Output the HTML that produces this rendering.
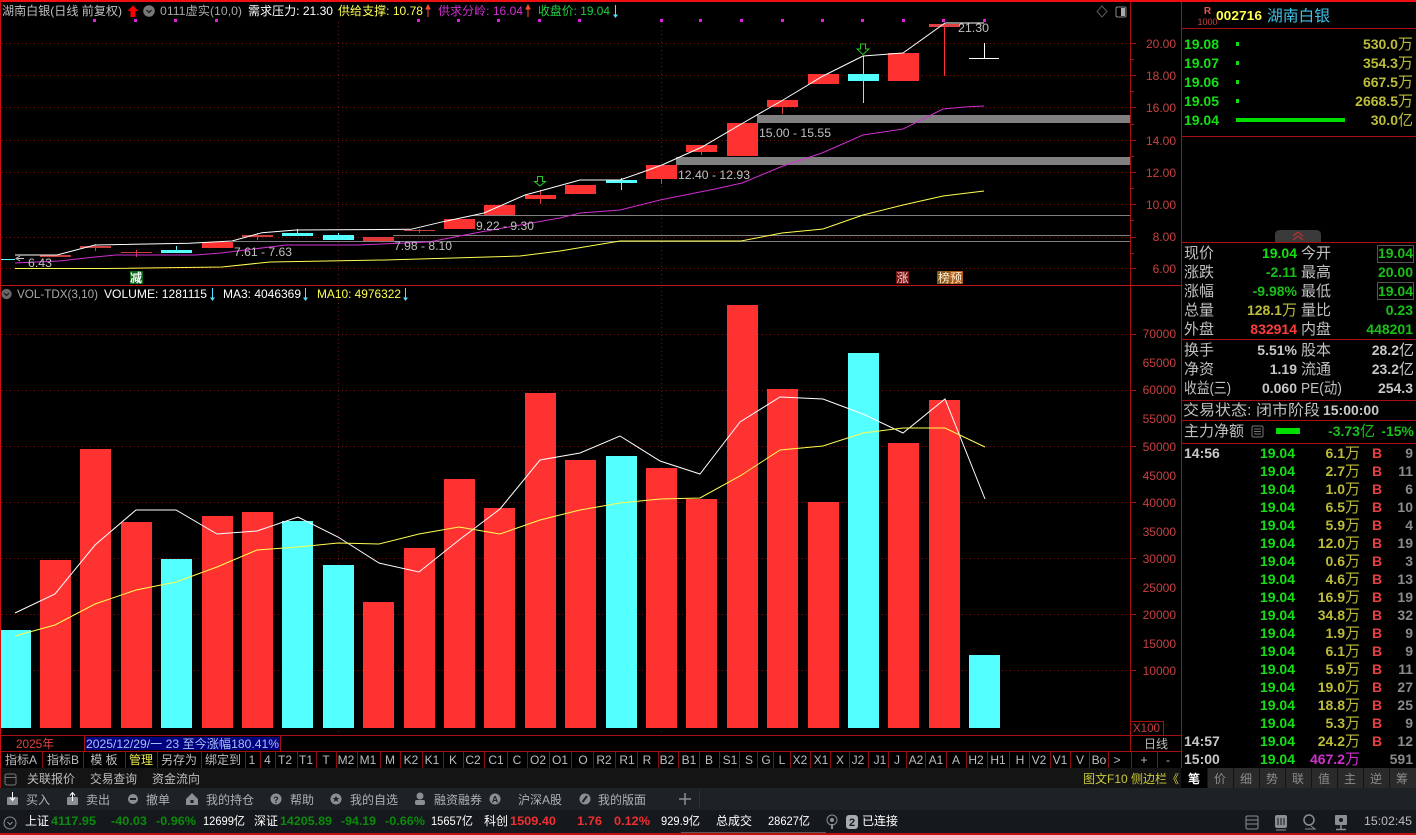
<!DOCTYPE html>
<html><head><meta charset="utf-8"><title>湖南白银</title>
<style>
html,body{margin:0;padding:0;background:#000;width:1416px;height:835px;overflow:hidden}
svg{display:block}
text{font-family:"Liberation Sans","Noto Sans CJK SC",sans-serif;font-size:12px;fill:#c0c0c0}
.ax text{fill:#c84040;text-anchor:end;font-size:12px}
.l text{font-size:15px;fill:#c0c0c0}
.b text,text.b{font-weight:bold;font-size:14px}
.e{text-anchor:end}
.n{font-weight:normal;font-size:15px}
.g,.g text{fill:#14e014}
.y,.y text{fill:#bcbc3a}
.w{fill:#c8c8c8}.r{fill:#ff3c3c}.d{fill:#0c8a0c}
.tb text{text-anchor:middle;font-size:12px;fill:#bdbdbd}
.tk text{font-weight:bold;font-size:14px}
.sb text{font-weight:bold;font-size:12px}
</style></head><body>
<svg width="1416" height="835" viewBox="0 0 1416 835" xmlns="http://www.w3.org/2000/svg">
<rect width="1416" height="835" fill="#000"/>

<!-- grid -->
<g stroke="#6e1414" stroke-width="1" stroke-dasharray="1 3" fill="none">
<path d="M2 43.5H1130M2 75.5H1130M2 107.5H1130M2 140.5H1130M2 172.5H1130M2 204.5H1130M2 237.5H1130M2 268.5H1130"/>
<path d="M2 334.5H1130M2 390.5H1130M2 446.5H1130M2 502.5H1130M2 558.5H1130M2 614.5H1130M2 670.5H1130"/>
<path d="M338.5 22V285M661.5 22V285M338.5 287V735M661.5 287V735"/>
</g>

<!-- magenta dots -->
<g fill="#e020e0">
<rect x="93" y="19" width="3" height="3"/><rect x="134" y="19" width="3" height="3"/><rect x="174" y="19" width="3" height="3"/><rect x="215" y="19" width="3" height="3"/><rect x="417" y="19" width="3" height="3"/><rect x="457" y="19" width="3" height="3"/><rect x="497" y="19" width="3" height="3"/><rect x="538" y="19" width="3" height="3"/><rect x="578" y="19" width="3" height="3"/><rect x="660" y="19" width="3" height="3"/><rect x="699" y="19" width="3" height="3"/><rect x="740" y="19" width="3" height="3"/><rect x="781" y="19" width="3" height="3"/><rect x="821" y="19" width="3" height="3"/><rect x="861" y="19" width="3" height="3"/><rect x="902" y="19" width="3" height="3"/><rect x="942" y="19" width="3" height="3"/><rect x="983" y="19" width="3" height="3"/>
</g>

<!-- zone lines -->
<g fill="#808080">
<rect x="757" y="115" width="373" height="8"/>
<rect x="676" y="157" width="454" height="8"/>
<rect x="474" y="215" width="656" height="1"/>
<rect x="393" y="235" width="737" height="1"/>
<rect x="233" y="241" width="897" height="1"/>
</g>

<!-- wicks -->
<g stroke-width="1" fill="none">
<path stroke="#d84040" d="M95.5 244V251M136.5 250V257M257.5 233V240M419.5 229V233M540.5 190V204M661.5 179V184M701.5 152V155M782.5 107V114"/>
<path stroke="#ff3232" d="M944.5 24V76"/>
<path stroke="#54ffff" d="M176.5 246V253M297.5 229V236M338.5 233V238M621.5 178V190M863.5 56V103"/>
</g>
<!-- candles -->
<g fill="#ff3232">
<rect x="40" y="255" width="31" height="2" fill="#c84040"/>
<rect x="80" y="246" width="31" height="2" fill="#c84040"/>
<rect x="121" y="252" width="31" height="1" fill="#c84040"/>
<rect x="202" y="242" width="31" height="6"/>
<rect x="242" y="235" width="31" height="2" fill="#c84040"/>
<rect x="363" y="237" width="31" height="4" fill="#e03838"/>
<rect x="404" y="230" width="31" height="1" fill="#c84040"/>
<rect x="444" y="219" width="31" height="10"/>
<rect x="484" y="205" width="31" height="10"/>
<rect x="525" y="195" width="31" height="4"/>
<rect x="565" y="185" width="31" height="9"/>
<rect x="646" y="165" width="31" height="14"/>
<rect x="686" y="145" width="31" height="7"/>
<rect x="727" y="123" width="31" height="33"/>
<rect x="767" y="100" width="31" height="7"/>
<rect x="808" y="74" width="31" height="10"/>
<rect x="888" y="53" width="31" height="28"/>
<rect x="929" y="24" width="31" height="3" fill="#e04040"/>
</g>
<g fill="#54ffff">
<rect x="161" y="250" width="31" height="3"/>
<rect x="282" y="233" width="31" height="3"/>
<rect x="323" y="235" width="31" height="5"/>
<rect x="606" y="180" width="31" height="3"/>
<rect x="848" y="74" width="31" height="7"/>
<rect x="1" y="259" width="14" height="1"/>
</g>
<!-- last T mark -->
<path d="M969 58.5H999M984.5 43V58" stroke="#fff" fill="none"/>

<!-- MA lines -->
<polyline fill="none" stroke="#ffff50" stroke-width="1" points="15,268.5 105,268.5 222,267 270,262 385,260 520,256 560,251 620,241 741,241 782,233 823,229 863,215 903,205 943,196 984,191"/>
<polyline fill="none" stroke="#d030d0" stroke-width="1" points="15,263 36,262 59,261 95,257 116,255 196,255 221,253 286,245 357,245 429,242 475,233 560,218 580,213 620,210 660,200 715,189 742,183 783,166 822,153 863,135 903,129 943,109 965,107 984,106"/>
<polyline fill="none" stroke="#ffffff" stroke-width="1" points="15,255 57,255 95,245 189,243.3 232,241 262,232.7 296,230 411,229.3 443,221.7 484,213 525,195 540,191 580,180 620,180 640,173 662,165 702,147 743,123 783,100 823,76 863,56 903,53 945,23 984,23"/>

<!-- zone labels -->
<g>
<text x="28" y="267" textLength="24" lengthAdjust="spacingAndGlyphs">6.43</text>
<text x="234" y="256" textLength="58" lengthAdjust="spacingAndGlyphs">7.61 - 7.63</text>
<text x="394" y="250" textLength="58" lengthAdjust="spacingAndGlyphs">7.98 - 8.10</text>
<text x="476" y="230" textLength="58" lengthAdjust="spacingAndGlyphs">9.22 - 9.30</text>
<text x="678" y="179" textLength="72" lengthAdjust="spacingAndGlyphs">12.40 - 12.93</text>
<text x="759" y="137" textLength="72" lengthAdjust="spacingAndGlyphs">15.00 - 15.55</text>
<text x="958" y="32" textLength="31" lengthAdjust="spacingAndGlyphs">21.30</text>
</g>
<path d="M24 258.5L16 258.5M20 256L16 258.5L20 261" stroke="#c0c0c0" fill="none"/>

<!-- green arrows -->
<path d="M860.5 44H865.5V49H869L863 54.5L857 49H860.5Z" fill="none" stroke="#28c828"/>
<path d="M537.5 176.5H542.5V181.5H545.5L540 186L534.5 181.5H537.5Z" fill="none" stroke="#28c828"/>

<!-- small flags -->
<rect x="130" y="271" width="13" height="13" fill="#0c6a1c"/>
<text x="130" y="282" style="font-size:12px;fill:#fff;font-weight:bold">减</text>
<rect x="896" y="271" width="13" height="13" fill="#7a1010"/>
<text x="896.5" y="282" style="font-size:12px;fill:#f0d8d8">涨</text>
<rect x="937" y="271" width="13" height="13" fill="#8c5a18"/>
<rect x="950" y="271" width="13" height="13" fill="#b05a14"/>
<text x="938" y="282" style="font-size:12px;fill:#fff0d8">榜预</text>

<!-- top title -->
<text x="2" y="15" textLength="120" lengthAdjust="spacingAndGlyphs">湖南白银(日线 前复权)</text>
<path d="M133 5.5L138.5 11H135.5V17H130.5V11H127.5Z" fill="#f00"/>
<circle cx="149" cy="11" r="5.8" fill="#777"/><path d="M146.5 10L149 12.5L151.5 10" stroke="#111" stroke-width="1.2" fill="none"/>
<text x="160" y="15" textLength="82" lengthAdjust="spacingAndGlyphs" style="fill:#a8a8a8">0111虚实(10,0)</text>
<text x="248" y="15" textLength="85" lengthAdjust="spacingAndGlyphs" style="fill:#fff">需求压力: 21.30</text>
<text x="338" y="15" textLength="85" lengthAdjust="spacingAndGlyphs" style="fill:#ffff50">供给支撑: 10.78</text>
<path d="M428 17V7M426 9L428 5L430 9Z" stroke="#ff4a30" fill="#ff4a30"/>
<text x="438" y="15" textLength="85" lengthAdjust="spacingAndGlyphs" style="fill:#d030d0">供求分岭: 16.04</text>
<path d="M528 17V7M526 9L528 5L530 9Z" stroke="#ff4a30" fill="#ff4a30"/>
<text x="538" y="15" textLength="72" lengthAdjust="spacingAndGlyphs" style="fill:#20d040">收盘价: 19.04</text>
<path d="M615.5 5V15" stroke="#54e0ff"/><path d="M613 14.5H618L615.5 18Z" fill="#54e0ff"/>

<!-- right-top icons -->
<path d="M1102 6L1107 11.5L1102 17L1097 11.5Z" fill="none" stroke="#5a5a5a"/>
<rect x="1116" y="7" width="10" height="10" rx="1.5" fill="none" stroke="#888"/><rect x="1121" y="8" width="4" height="8" fill="#aaa"/>

<!-- volume header -->
<circle cx="6.5" cy="294" r="5.2" fill="#666"/><path d="M4 293L6.5 295.5L9 293" stroke="#111" fill="none"/>
<text x="17" y="298" textLength="81" lengthAdjust="spacingAndGlyphs" style="fill:#a8a8a8">VOL-TDX(3,10)</text>
<text x="104" y="298" textLength="103" lengthAdjust="spacingAndGlyphs" style="fill:#fff">VOLUME: 1281115</text>
<path d="M212.5 288V298" stroke="#54e0ff"/><path d="M210 297.5H215L212.5 301Z" fill="#54e0ff"/>
<text x="223" y="298" textLength="78" lengthAdjust="spacingAndGlyphs" style="fill:#fff">MA3: 4046369</text>
<path d="M305.5 288V298" stroke="#54e0ff"/><path d="M303 297.5H308L305.5 301Z" fill="#54e0ff"/>
<text x="317" y="298" textLength="84" lengthAdjust="spacingAndGlyphs" style="fill:#ffff50">MA10: 4976322</text>
<path d="M405.5 288V298" stroke="#54e0ff"/><path d="M403 297.5H408L405.5 301Z" fill="#54e0ff"/>

<!-- volume bars -->
<g fill="#ff3232">
<rect x="40" y="560" width="31" height="168"/>
<rect x="80" y="449" width="31" height="279"/>
<rect x="121" y="522" width="31" height="206"/>
<rect x="202" y="516" width="31" height="212"/>
<rect x="242" y="512" width="31" height="216"/>
<rect x="363" y="602" width="31" height="126"/>
<rect x="404" y="548" width="31" height="180"/>
<rect x="444" y="479" width="31" height="249"/>
<rect x="484" y="508" width="31" height="220"/>
<rect x="525" y="393" width="31" height="335"/>
<rect x="565" y="460" width="31" height="268"/>
<rect x="646" y="468" width="31" height="260"/>
<rect x="686" y="499" width="31" height="229"/>
<rect x="727" y="305" width="31" height="423"/>
<rect x="767" y="389" width="31" height="339"/>
<rect x="808" y="502" width="31" height="226"/>
<rect x="888" y="443" width="31" height="285"/>
<rect x="929" y="400" width="31" height="328"/>
</g>
<g fill="#54ffff">
<rect x="1" y="630" width="30" height="98"/>
<rect x="161" y="559" width="31" height="169"/>
<rect x="282" y="521" width="31" height="207"/>
<rect x="323" y="565" width="31" height="163"/>
<rect x="606" y="456" width="31" height="272"/>
<rect x="848" y="353" width="31" height="375"/>
<rect x="969" y="655" width="31" height="73"/>
</g>
<polyline fill="none" stroke="#fff" stroke-width="1" points="15,613 55,594 95,545 136,510 176,510 217,534 257,531 298,517 338,537 379,563 419,572 459,540 500,509 540,460 580,453 620,436 660,461 700,474 740,422 780,397 823,399 863,414 903,433 945,399 985,499"/>
<polyline fill="none" stroke="#ffff50" stroke-width="1" points="15,636 55,625 95,604 136,590 176,582 217,567 257,550 298,547 338,543 379,544 419,534 459,527 500,534 540,520 580,510 620,503 660,499 700,498 740,476 780,450 823,446 863,433 903,428 945,428 985,447"/>

<!-- frame lines -->
<g fill="#a81010">
<rect x="0" y="0" width="1416" height="2" fill="#ee1010"/>
<rect x="0" y="0" width="1" height="768" fill="#d01010"/>
<rect x="1130" y="2" width="1" height="749"/>
<rect x="1181" y="2" width="1" height="766"/>
<rect x="0" y="285" width="1181" height="1" fill="#c01818"/>
<rect x="1182" y="28" width="234" height="1"/>
<rect x="1182" y="136" width="234" height="1"/>
<rect x="1182" y="242" width="234" height="1"/>
<rect x="1182" y="339" width="234" height="1"/>
<rect x="1182" y="400" width="234" height="1"/>
<rect x="1182" y="420" width="234" height="1"/>
<rect x="1182" y="443" width="234" height="1"/>
<rect x="0" y="735" width="1181" height="1"/>
<rect x="0" y="751" width="1181" height="1"/>
</g>

<!-- axis ticks -->
<path d="M1131 43.5H1136M1131 59.5H1134M1131 75.5H1136M1131 91.5H1134M1131 107.5H1136M1131 124.5H1134M1131 140.5H1136M1131 156.5H1134M1131 172.5H1136M1131 188.5H1134M1131 204.5H1136M1131 220.5H1134M1131 237.5H1136M1131 253.5H1134M1131 268.5H1136M1131 334.5H1136M1131 390.5H1136M1131 446.5H1136M1131 502.5H1136M1131 558.5H1136M1131 614.5H1136M1131 670.5H1136" stroke="#a81010" fill="none"/>
<g class="ax">
<text x="1176" y="48">20.00</text><text x="1176" y="80">18.00</text><text x="1176" y="112">16.00</text><text x="1176" y="145">14.00</text><text x="1176" y="177">12.00</text><text x="1176" y="209">10.00</text><text x="1176" y="241">8.00</text><text x="1176" y="273">6.00</text>
<text x="1176" y="338">70000</text><text x="1176" y="367">65000</text><text x="1176" y="394">60000</text><text x="1176" y="423">55000</text><text x="1176" y="451">50000</text><text x="1176" y="480">45000</text><text x="1176" y="507">40000</text><text x="1176" y="536">35000</text><text x="1176" y="563">30000</text><text x="1176" y="592">25000</text><text x="1176" y="619">20000</text><text x="1176" y="648">15000</text><text x="1176" y="675">10000</text>
</g>
<path d="M1131.5 721.5H1163.5V735" stroke="#a81010" fill="none"/>
<text x="1133" y="732" style="fill:#c84040;font-size:11.5px">X100</text>

<!-- stock header -->
<text x="1207.5" y="14" text-anchor="middle" style="fill:#e85050;font-size:10px;font-weight:bold">R</text>
<text x="1207.5" y="25" text-anchor="middle" style="fill:#c84040;font-size:9px">1000</text>
<text x="1216" y="20" textLength="46" lengthAdjust="spacingAndGlyphs" style="fill:#ffff50;font-weight:bold;font-size:13px">002716</text>
<text x="1267" y="21" textLength="63" lengthAdjust="spacingAndGlyphs" style="fill:#40c4e8;font-size:15.5px">湖南白银</text>

<!-- order book -->
<g class="b">
<text x="1184" y="49" class="g" textLength="35" lengthAdjust="spacingAndGlyphs">19.08</text>
<text x="1184" y="68" class="g" textLength="35" lengthAdjust="spacingAndGlyphs">19.07</text>
<text x="1184" y="87" class="g" textLength="35" lengthAdjust="spacingAndGlyphs">19.06</text>
<text x="1184" y="106" class="g" textLength="35" lengthAdjust="spacingAndGlyphs">19.05</text>
<text x="1184" y="125" class="g" textLength="35" lengthAdjust="spacingAndGlyphs">19.04</text>
<text x="1413" y="49" class="e y">530.0<tspan class="n">万</tspan></text>
<text x="1413" y="68" class="e y">354.3<tspan class="n">万</tspan></text>
<text x="1413" y="87" class="e y">667.5<tspan class="n">万</tspan></text>
<text x="1413" y="106" class="e y">2668.5<tspan class="n">万</tspan></text>
<text x="1413" y="125" class="e y">30.0<tspan class="n">亿</tspan></text>
</g>
<g fill="#10dc10">
<rect x="1236" y="42" width="3" height="4"/><rect x="1236" y="61" width="3" height="4"/><rect x="1236" y="80" width="3" height="4"/><rect x="1236" y="99" width="3" height="4"/>
<rect x="1236" y="118" width="109" height="4" fill="#00e000"/>
</g>

<!-- collapse tab -->
<path d="M1275 242V235Q1275 230 1280 230H1316Q1321 230 1321 235V242Z" fill="#3a3a3a"/>
<path d="M1293 236L1298 232L1303 236M1293 240L1298 236L1303 240" stroke="#b83030" stroke-width="1.2" fill="none"/>

<!-- quote table -->
<g class="l">
<text x="1184" y="258">现价</text><text x="1184" y="277">涨跌</text><text x="1184" y="296">涨幅</text><text x="1184" y="315">总量</text><text x="1184" y="334">外盘</text>
<text x="1301" y="258">今开</text><text x="1301" y="277">最高</text><text x="1301" y="296">最低</text><text x="1301" y="315">量比</text><text x="1301" y="334">内盘</text>
<text x="1184" y="355">换手</text><text x="1184" y="374">净资</text><text x="1184" y="393" textLength="47" lengthAdjust="spacingAndGlyphs">收益(三)</text>
<text x="1301" y="355">股本</text><text x="1301" y="374">流通</text><text x="1301" y="393" textLength="41" lengthAdjust="spacingAndGlyphs">PE(动)</text>
<text x="1183" y="415" textLength="137" lengthAdjust="spacingAndGlyphs">交易状态: 闭市阶段</text>
<text x="1184" y="436">主力净额</text>
</g>
<g class="b">
<text x="1297" y="258" class="e g">19.04</text><text x="1297" y="277" class="e" style="fill:#18c018">-2.11</text><text x="1297" y="296" class="e" style="fill:#18c018">-9.98%</text>
<text x="1297" y="315" class="e y">128.1<tspan class="n">万</tspan></text>
<text x="1297" y="334" class="e r">832914</text>
<text x="1413" y="258" class="e" style="fill:#18c018">19.04</text><text x="1413" y="277" class="e" style="fill:#18c018">20.00</text><text x="1413" y="296" class="e" style="fill:#18c018">19.04</text><text x="1413" y="315" class="e" style="fill:#18c018">0.23</text><text x="1413" y="334" class="e" style="fill:#18c018">448201</text>
<text x="1297" y="355" class="e w">5.51%</text><text x="1297" y="374" class="e w">1.19</text><text x="1297" y="393" class="e w">0.060</text>
<text x="1414" y="355" class="e w">28.2<tspan class="n">亿</tspan></text><text x="1414" y="374" class="e w">23.2<tspan class="n">亿</tspan></text><text x="1413" y="393" class="e w">254.3</text>
<text x="1323" y="415" class="w" textLength="56" lengthAdjust="spacingAndGlyphs">15:00:00</text>
<text x="1375" y="436" class="e" style="fill:#18c018">-3.73<tspan class="n">亿</tspan></text>
<text x="1414" y="436" class="e" style="fill:#18c018">-15%</text>
</g>
<rect x="1377.5" y="245.5" width="36" height="17" fill="none" stroke="#555"/>
<rect x="1377.5" y="282.5" width="36" height="17" fill="none" stroke="#555"/>
<rect x="1276" y="428" width="24" height="6" fill="#00e000"/>
<rect x="1252" y="426" width="11" height="11" rx="1.5" fill="none" stroke="#777"/><path d="M1254 429H1261M1254 431.5H1261M1254 434H1261" stroke="#777"/>

<!-- ticks -->
<g class="tk">
<text x="1184" y="458" class="w">14:56</text>
<text x="1184" y="746" class="w">14:57</text>
<text x="1184" y="764" class="w">15:00</text>
<g class="e g">
<text x="1295" y="458">19.04</text><text x="1295" y="476">19.04</text><text x="1295" y="494">19.04</text><text x="1295" y="512">19.04</text><text x="1295" y="530">19.04</text><text x="1295" y="548">19.04</text><text x="1295" y="566">19.04</text><text x="1295" y="584">19.04</text><text x="1295" y="602">19.04</text><text x="1295" y="620">19.04</text><text x="1295" y="638">19.04</text><text x="1295" y="656">19.04</text><text x="1295" y="674">19.04</text><text x="1295" y="692">19.04</text><text x="1295" y="710">19.04</text><text x="1295" y="728">19.04</text><text x="1295" y="746">19.04</text><text x="1295" y="764">19.04</text>
</g>
<g class="e y">
<text x="1360" y="458">6.1<tspan class="n">万</tspan></text><text x="1360" y="476">2.7<tspan class="n">万</tspan></text><text x="1360" y="494">1.0<tspan class="n">万</tspan></text><text x="1360" y="512">6.5<tspan class="n">万</tspan></text><text x="1360" y="530">5.9<tspan class="n">万</tspan></text><text x="1360" y="548">12.0<tspan class="n">万</tspan></text><text x="1360" y="566">0.6<tspan class="n">万</tspan></text><text x="1360" y="584">4.6<tspan class="n">万</tspan></text><text x="1360" y="602">16.9<tspan class="n">万</tspan></text><text x="1360" y="620">34.8<tspan class="n">万</tspan></text><text x="1360" y="638">1.9<tspan class="n">万</tspan></text><text x="1360" y="656">6.1<tspan class="n">万</tspan></text><text x="1360" y="674">5.9<tspan class="n">万</tspan></text><text x="1360" y="692">19.0<tspan class="n">万</tspan></text><text x="1360" y="710">18.8<tspan class="n">万</tspan></text><text x="1360" y="728">5.3<tspan class="n">万</tspan></text><text x="1360" y="746">24.2<tspan class="n">万</tspan></text>
</g>
<text x="1360" y="764" class="e" style="fill:#d030d0">467.2<tspan class="n">万</tspan></text>
<g>
<text x="1372" y="458" style="fill:#e84040">B</text><text x="1372" y="476" style="fill:#e84040">B</text><text x="1372" y="494" style="fill:#e84040">B</text><text x="1372" y="512" style="fill:#e84040">B</text><text x="1372" y="530" style="fill:#e84040">B</text><text x="1372" y="548" style="fill:#e84040">B</text><text x="1372" y="566" style="fill:#e84040">B</text><text x="1372" y="584" style="fill:#e84040">B</text><text x="1372" y="602" style="fill:#e84040">B</text><text x="1372" y="620" style="fill:#e84040">B</text><text x="1372" y="638" style="fill:#e84040">B</text><text x="1372" y="656" style="fill:#e84040">B</text><text x="1372" y="674" style="fill:#e84040">B</text><text x="1372" y="692" style="fill:#e84040">B</text><text x="1372" y="710" style="fill:#e84040">B</text><text x="1372" y="728" style="fill:#e84040">B</text><text x="1372" y="746" style="fill:#e84040">B</text>
</g>
<g class="e">
<text x="1413" y="458" style="fill:#8a8a8a">9</text><text x="1413" y="476" style="fill:#8a8a8a">11</text><text x="1413" y="494" style="fill:#8a8a8a">6</text><text x="1413" y="512" style="fill:#8a8a8a">10</text><text x="1413" y="530" style="fill:#8a8a8a">4</text><text x="1413" y="548" style="fill:#8a8a8a">19</text><text x="1413" y="566" style="fill:#8a8a8a">3</text><text x="1413" y="584" style="fill:#8a8a8a">13</text><text x="1413" y="602" style="fill:#8a8a8a">19</text><text x="1413" y="620" style="fill:#8a8a8a">32</text><text x="1413" y="638" style="fill:#8a8a8a">9</text><text x="1413" y="656" style="fill:#8a8a8a">9</text><text x="1413" y="674" style="fill:#8a8a8a">11</text><text x="1413" y="692" style="fill:#8a8a8a">27</text><text x="1413" y="710" style="fill:#8a8a8a">25</text><text x="1413" y="728" style="fill:#8a8a8a">9</text><text x="1413" y="746" style="fill:#8a8a8a">12</text><text x="1413" y="764" style="fill:#8a8a8a">591</text>
</g>
</g>

<!-- date bar -->
<text x="16" y="748" textLength="38" lengthAdjust="spacingAndGlyphs" style="fill:#e04040">2025年</text>
<rect x="85" y="737" width="195" height="13" fill="#000080"/>
<path d="M84.5 736V751M280.5 736V751" stroke="#a81010"/>
<text x="86" y="748" textLength="193" lengthAdjust="spacingAndGlyphs" style="fill:#a8c0f0">2025/12/29/一 23 至今涨幅180.41%</text>
<text x="1156" y="748" text-anchor="middle" style="font-size:12px;fill:#bdbdbd">日线</text>

<!-- tab row -->
<path d="M42.5 752V768M83.5 752V768M125.5 752V768M157.5 752V768M201.5 752V768M245.5 752V768M260.5 752V768M275.5 752V768M297.5 752V768M316.5 752V768M336.5 752V768M357.5 752V768M380.5 752V768M400.5 752V768M422.5 752V768M443.5 752V768M463.5 752V768M484.5 752V768M507.5 752V768M527.5 752V768M549.5 752V768M571.5 752V768M593.5 752V768M615.5 752V768M637.5 752V768M658.5 752V768M678.5 752V768M699.5 752V768M719.5 752V768M739.5 752V768M757.5 752V768M773.5 752V768M790.5 752V768M810.5 752V768M830.5 752V768M849.5 752V768M868.5 752V768M888.5 752V768M906.5 752V768M925.5 752V768M946.5 752V768M966.5 752V768M987.5 752V768M1009.5 752V768M1029.5 752V768M1050.5 752V768M1070.5 752V768M1089.5 752V768M1108.5 752V768M1131.5 752V768M1157.5 752V768" stroke="#8a0c0c" fill="none"/>
<g class="tb">
<text x="21" y="764">指标A</text><text x="63" y="764">指标B</text><text x="104" y="764">模 板</text><text x="141" y="764" style="fill:#e8e850">管理</text><text x="179" y="764">另存为</text><text x="223" y="764">绑定到</text>
<text x="252" y="764">1</text><text x="267.5" y="764">4</text><text x="285" y="764">T2</text><text x="306" y="764">T1</text><text x="326" y="764">T</text><text x="346" y="764">M2</text><text x="368" y="764">M1</text><text x="390" y="764">M</text><text x="411" y="764">K2</text><text x="432" y="764">K1</text><text x="453" y="764">K</text><text x="473" y="764">C2</text><text x="496" y="764">C1</text><text x="517" y="764">C</text><text x="538" y="764">O2</text><text x="560" y="764">O1</text><text x="583" y="764">O</text><text x="604" y="764">R2</text><text x="627" y="764">R1</text><text x="647" y="764">R</text><text x="667" y="764">B2</text><text x="689" y="764">B1</text><text x="709" y="764">B</text><text x="730" y="764">S1</text><text x="749" y="764">S</text><text x="766" y="764">G</text><text x="782" y="764">L</text><text x="800" y="764">X2</text><text x="821" y="764">X1</text><text x="840" y="764">X</text><text x="858" y="764">J2</text><text x="880" y="764">J1</text><text x="897" y="764">J</text><text x="916" y="764">A2</text><text x="936" y="764">A1</text><text x="956" y="764">A</text><text x="976" y="764">H2</text><text x="998" y="764">H1</text><text x="1020" y="764">H</text><text x="1039" y="764">V2</text><text x="1060" y="764">V1</text><text x="1080" y="764">V</text><text x="1099" y="764">Bo</text><text x="1117" y="764">&gt;</text><text x="1144" y="764">+</text><text x="1168" y="764">-</text>
</g>

<!-- row: related -->
<rect x="0" y="768" width="1181" height="20" fill="#141414"/>
<rect x="0" y="768" width="1" height="20" fill="#a01010"/>
<rect x="5" y="774" width="11" height="11" rx="2" fill="none" stroke="#777"/><path d="M5 777.5H16" stroke="#777"/>
<text x="27" y="783" style="fill:#bdbdbd" textLength="48" lengthAdjust="spacingAndGlyphs">关联报价</text>
<text x="90" y="783" style="fill:#bdbdbd" textLength="47" lengthAdjust="spacingAndGlyphs">交易查询</text>
<text x="152" y="783" style="fill:#bdbdbd" textLength="48" lengthAdjust="spacingAndGlyphs">资金流向</text>
<text x="1083" y="783" style="fill:#c8c83c" textLength="96" lengthAdjust="spacingAndGlyphs">图文F10 侧边栏《</text>
<rect x="1182" y="768" width="234" height="20" fill="#2a2a2a"/>
<rect x="1182" y="768" width="25" height="20" fill="#000"/>
<path d="M1207.5 768V788M1233.5 768V788M1259.5 768V788M1285.5 768V788M1311.5 768V788M1337.5 768V788M1363.5 768V788M1389.5 768V788" stroke="#151515"/>
<g>
<text x="1194" y="783" style="fill:#fff;font-size:12px;font-weight:bold" text-anchor="middle">笔</text>
<text x="1220" y="783" style="fill:#8c8c8c" text-anchor="middle">价</text><text x="1246" y="783" style="fill:#8c8c8c" text-anchor="middle">细</text><text x="1272" y="783" style="fill:#8c8c8c" text-anchor="middle">势</text><text x="1298" y="783" style="fill:#8c8c8c" text-anchor="middle">联</text><text x="1324" y="783" style="fill:#8c8c8c" text-anchor="middle">值</text><text x="1350" y="783" style="fill:#8c8c8c" text-anchor="middle">主</text><text x="1376" y="783" style="fill:#8c8c8c" text-anchor="middle">逆</text><text x="1402" y="783" style="fill:#8c8c8c" text-anchor="middle">筹</text>
</g>

<!-- toolbar -->
<rect x="0" y="788" width="1416" height="22" fill="#1d2226"/>
<g>
<rect x="7" y="797" width="11" height="8" rx="1" fill="#8a8f94"/><path d="M12.5 792V800M10 797.5L12.5 800.5L15 797.5" stroke="#fff" fill="none"/>
<text x="26" y="804" style="fill:#aeb2b6">买入</text>
<rect x="67" y="797" width="11" height="8" rx="1" fill="#8a8f94"/><path d="M72.5 801V793M70 795.5L72.5 792.5L75 795.5" stroke="#fff" fill="none"/>
<text x="86" y="804" style="fill:#aeb2b6">卖出</text>
<circle cx="133" cy="799" r="5" fill="#8a8f94"/><path d="M130 799H136" stroke="#1d2226" stroke-width="2"/>
<text x="146" y="804" style="fill:#aeb2b6">撤单</text>
<path d="M192 793L198 799V805H186V799Z" fill="#8a8f94"/><rect x="190.5" y="800" width="3" height="3" fill="#1d2226"/>
<text x="206" y="804" style="fill:#aeb2b6">我的持仓</text>
<circle cx="276" cy="799" r="5.5" fill="#8a8f94"/><text x="276" y="803" text-anchor="middle" style="fill:#1d2226;font-size:9px;font-weight:bold">?</text>
<text x="290" y="804" style="fill:#aeb2b6">帮助</text>
<circle cx="336" cy="799" r="5.5" fill="#8a8f94"/><path d="M336 795.5L337 798H339.5L337.5 799.5L338.3 802L336 800.5L333.7 802L334.5 799.5L332.5 798H335Z" fill="#1d2226"/>
<text x="350" y="804" style="fill:#aeb2b6">我的自选</text>
<circle cx="420" cy="796" r="3.5" fill="#8a8f94"/><rect x="415" y="800" width="10" height="5" rx="2" fill="#8a8f94"/>
<text x="434" y="804" style="fill:#aeb2b6">融资融券</text>
<circle cx="495" cy="799" r="5.5" fill="#8a8f94"/><text x="495" y="802.5" text-anchor="middle" style="fill:#1d2226;font-size:9px;font-weight:bold">A</text>
<text x="518" y="804" textLength="44" lengthAdjust="spacingAndGlyphs" style="fill:#aeb2b6">沪深A股</text>
<circle cx="585" cy="799" r="5.5" fill="#8a8f94"/><path d="M582.5 802L587 796" stroke="#1d2226" stroke-width="2"/>
<text x="598" y="804" style="fill:#aeb2b6">我的版面</text>
<path d="M679 799H691M685 793V805" stroke="#8a8f94" stroke-width="1.5"/>
<path d="M699.5 790V808" stroke="#2a3036"/>
</g>

<!-- status bar -->
<rect x="0" y="810" width="1416" height="23" fill="#15181c"/>
<circle cx="10" cy="823" r="6" fill="none" stroke="#8a8f94"/><path d="M7.5 822L10 824.5L12.5 822" stroke="#8a8f94" fill="none"/>
<text x="25" y="825" style="fill:#fff;font-size:12px">上证</text>
<g class="sb">
<text x="51" y="825" class="d" textLength="45" lengthAdjust="spacingAndGlyphs">4117.95</text>
<text x="111" y="825" class="d" textLength="36" lengthAdjust="spacingAndGlyphs">-40.03</text>
<text x="156" y="825" class="d" textLength="40" lengthAdjust="spacingAndGlyphs">-0.96%</text>
<text x="280" y="825" class="d" textLength="52" lengthAdjust="spacingAndGlyphs">14205.89</text>
<text x="341" y="825" class="d" textLength="35" lengthAdjust="spacingAndGlyphs">-94.19</text>
<text x="385" y="825" class="d" textLength="40" lengthAdjust="spacingAndGlyphs">-0.66%</text>
<text x="510" y="825" style="fill:#f03030" textLength="46" lengthAdjust="spacingAndGlyphs">1509.40</text>
<text x="577" y="825" style="fill:#f03030" textLength="25" lengthAdjust="spacingAndGlyphs">1.76</text>
<text x="614" y="825" style="fill:#f03030" textLength="36" lengthAdjust="spacingAndGlyphs">0.12%</text>
</g>
<text x="203" y="825" style="fill:#fff" textLength="42" lengthAdjust="spacingAndGlyphs">12699亿</text>
<text x="254" y="825" style="fill:#fff">深证</text>
<text x="431" y="825" style="fill:#fff" textLength="42" lengthAdjust="spacingAndGlyphs">15657亿</text>
<text x="484" y="825" style="fill:#fff">科创</text>
<text x="661" y="825" style="fill:#fff" textLength="39" lengthAdjust="spacingAndGlyphs">929.9亿</text>
<text x="716" y="825" style="fill:#fff">总成交</text>
<text x="768" y="825" style="fill:#fff" textLength="42" lengthAdjust="spacingAndGlyphs">28627亿</text>
<circle cx="832" cy="820" r="5" fill="none" stroke="#8a8f94"/><circle cx="832" cy="820" r="2" fill="#8a8f94"/><path d="M832 824V829" stroke="#8a8f94" stroke-width="2"/>
<rect x="846" y="815" width="12" height="14" rx="3" fill="#a8acb0"/>
<text x="852" y="826" text-anchor="middle" style="fill:#15181c;font-weight:bold;font-size:11px">2</text>
<text x="862" y="825" style="fill:#fff">已连接</text>
<rect x="1246" y="816" width="12" height="13" rx="1.5" fill="none" stroke="#8a8f94"/><path d="M1246 820H1258M1246 824H1258" stroke="#8a8f94"/>
<rect x="1275" y="815" width="12" height="13" rx="2" fill="#8a8f94"/><path d="M1278 818V825M1281 818V825M1284 818V825" stroke="#15181c"/><path d="M1276 830H1286" stroke="#8a8f94"/>
<circle cx="1309" cy="820" r="5" fill="none" stroke="#8a8f94" stroke-width="1.5"/><path d="M1311 826L1315 829H1305" stroke="#8a8f94" fill="none"/>
<rect x="1335" y="815" width="12" height="10" rx="1" fill="#8a8f94"/><path d="M1341 825V829M1336 829.5H1346" stroke="#8a8f94" stroke-width="1.5"/><circle cx="1341" cy="820" r="2" fill="#15181c"/>
<text x="1364" y="825" style="fill:#bdbdbd" textLength="48" lengthAdjust="spacingAndGlyphs">15:02:45</text>

<rect x="0" y="833" width="1416" height="2" fill="#c01010"/>
<rect x="681" y="832" width="145" height="1" fill="#5a5a5a"/>
</svg>
</body></html>
